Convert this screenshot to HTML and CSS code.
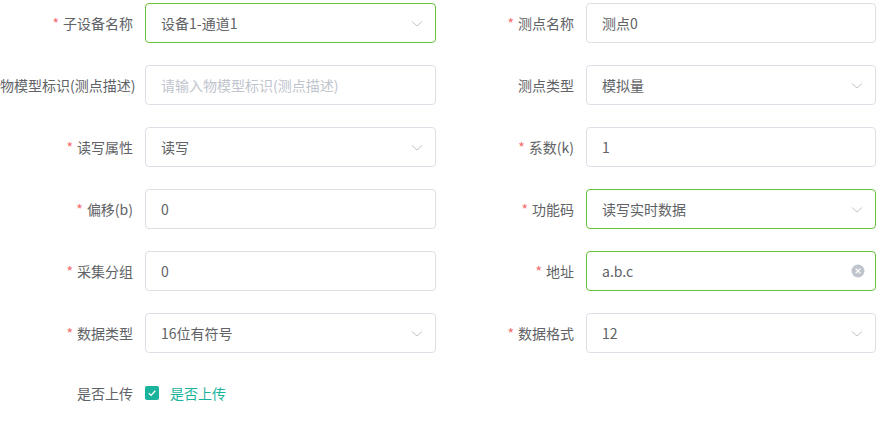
FILE: index.html
```html
<!DOCTYPE html>
<html lang="zh-CN">
<head>
<meta charset="utf-8">
<link rel="stylesheet" href="styles.css">
</head>
<body>
<form class="form">
  <div class="item left">
    <label class="label"><span class="req">*</span>子设备名称</label>
    <div class="input ok select"><span class="val">设备1-通道1</span><svg class="arrow" viewBox="0 0 12 8"><path d="M1 1.5 L6 6 L11 1.5" /></svg></div>
  </div>
  <div class="item right">
    <label class="label"><span class="req">*</span>测点名称</label>
    <div class="input"><span class="val">测点0</span></div>
  </div>

  <div class="item left">
    <label class="label">物模型标识(测点描述)</label>
    <div class="input"><span class="ph">请输入物模型标识(测点描述)</span></div>
  </div>
  <div class="item right">
    <label class="label">测点类型</label>
    <div class="input select"><span class="val">模拟量</span><svg class="arrow" viewBox="0 0 12 8"><path d="M1 1.5 L6 6 L11 1.5" /></svg></div>
  </div>

  <div class="item left">
    <label class="label"><span class="req">*</span>读写属性</label>
    <div class="input select"><span class="val">读写</span><svg class="arrow" viewBox="0 0 12 8"><path d="M1 1.5 L6 6 L11 1.5" /></svg></div>
  </div>
  <div class="item right">
    <label class="label"><span class="req">*</span>系数(k)</label>
    <div class="input"><span class="val">1</span></div>
  </div>

  <div class="item left">
    <label class="label"><span class="req">*</span>偏移(b)</label>
    <div class="input"><span class="val">0</span></div>
  </div>
  <div class="item right">
    <label class="label"><span class="req">*</span>功能码</label>
    <div class="input ok select"><span class="val">读写实时数据</span><svg class="arrow" viewBox="0 0 12 8"><path d="M1 1.5 L6 6 L11 1.5" /></svg></div>
  </div>

  <div class="item left">
    <label class="label"><span class="req">*</span>采集分组</label>
    <div class="input"><span class="val">0</span></div>
  </div>
  <div class="item right">
    <label class="label"><span class="req">*</span>地址</label>
    <div class="input ok"><span class="val">a.b.c</span><svg class="clear" viewBox="0 0 14 14"><circle cx="7" cy="7" r="6.5" /><path d="M4.6 4.6 L9.4 9.4 M9.4 4.6 L4.6 9.4" /></svg></div>
  </div>

  <div class="item left">
    <label class="label"><span class="req">*</span>数据类型</label>
    <div class="input select"><span class="val">16位有符号</span><svg class="arrow" viewBox="0 0 12 8"><path d="M1 1.5 L6 6 L11 1.5" /></svg></div>
  </div>
  <div class="item right">
    <label class="label"><span class="req">*</span>数据格式</label>
    <div class="input select"><span class="val">12</span><svg class="arrow" viewBox="0 0 12 8"><path d="M1 1.5 L6 6 L11 1.5" /></svg></div>
  </div>

  <div class="item left check-row">
    <label class="label">是否上传</label>
    <div class="check"><span class="box"><svg viewBox="0 0 14 14"><path d="M3.8 7.2 L6.1 9.4 L10.3 4.8" /></svg></span><span class="check-text">是否上传</span></div>
  </div>
</form>
</body>
</html>
```

FILE: styles.css
```css
* { box-sizing: border-box; }
html, body { margin: 0; padding: 0; background: #fff; }
body {
  font-family: "Noto Sans CJK SC", "Noto Sans", sans-serif;
  font-size: 14px;
  color: #606266;
  overflow: hidden;
}
.form {
  display: grid;
  grid-template-columns: 436px 432px;
  column-gap: 8px;
  row-gap: 22px;
  padding-top: 3px;
}
.item { display: flex; align-items: center; height: 40px; }
.left .label { width: 145px; }
.right .label { width: 142px; }
.label {
  flex: none;
  text-align: right;
  padding-right: 12px;
  line-height: 40px;
  white-space: nowrap;
  direction: rtl;
  unicode-bidi: plaintext;
  color: #606266;
}
.req { color: #f56c6c; margin-right: 4px; }
.input {
  flex: 1;
  height: 40px;
  border: 1px solid #dcdfe6;
  border-radius: 4px;
  display: flex;
  align-items: center;
  padding: 0 15px;
  position: relative;
  background: #fff;
}
.input.ok { border-color: #67c23a; }
.val { color: #606266; }
.ph { color: #c0c4cc; }
.arrow {
  position: absolute;
  right: 12px;
  top: 16px;
  width: 12px;
  height: 8px;
  fill: none;
  stroke: #c0c4cc;
  stroke-width: 1;
}
.clear {
  position: absolute;
  right: 10px;
  top: 12px;
  width: 14px;
  height: 14px;
}
.clear circle { fill: #c0c4cc; }
.clear path { stroke: #fff; stroke-width: 1.3; fill: none; }
.check-row { margin-top: -2px; }
.check { display: flex; align-items: center; }
.box {
  width: 14px;
  height: 14px;
  border-radius: 2px;
  background: #1ab39c;
  display: inline-flex;
}
.box svg { width: 14px; height: 14px; fill: none; stroke: #fff; stroke-width: 1.3; }
.check-text { color: #1ab39c; margin-left: 11px; }
```
